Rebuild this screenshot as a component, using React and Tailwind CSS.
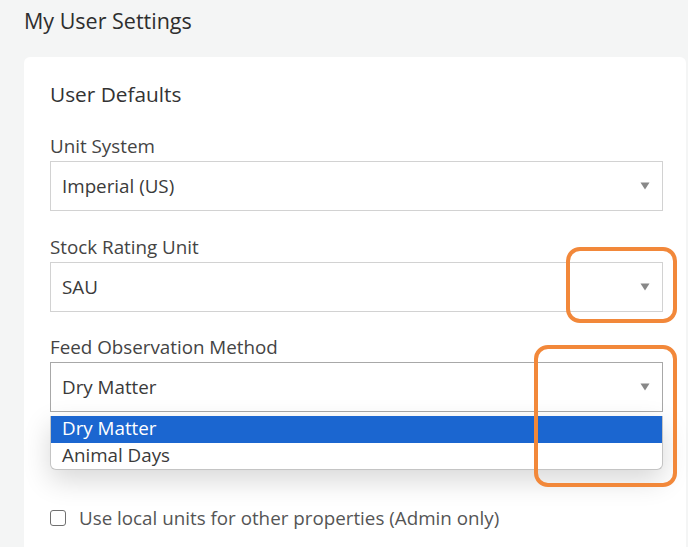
import React from "react";

function Arrow() {
  return (
    <svg width="10" height="8" viewBox="0 0 10 8" className="shrink-0">
      <path d="M0.5 0.5 H9.5 L5 7.5 Z" fill="#888888" />
    </svg>
  );
}

function Select({ value, focused }) {
  return (
    <div
      className={`mt-[3px] h-[50px] w-full flex items-center justify-between pl-[11px] pr-[12px] bg-white border ${
        focused ? "border-[#a8a8a8]" : "border-[#d2d2d2]"
      } text-[18.8px] text-[#3a3a3a]`}
    >
      <span>{value}</span>
      <Arrow />
    </div>
  );
}

function Label({ children, mt }) {
  return (
    <div className={`${mt} h-[24px] leading-[24px] text-[18.8px] text-[#444444]`}>{children}</div>
  );
}

export default function App() {
  return (
    <div
      className="relative w-[688px] h-[547px] overflow-hidden bg-[#f4f5f5]"
      style={{ fontFamily: "'Open Sans', Lato, sans-serif" }}
    >
      <div className="h-[57px] pl-[24px] pt-[7px] text-[21.5px] leading-[28px] text-[#2e2e2e]">
        My User Settings
      </div>
      <div className="ml-[24px] mr-[2px] h-[490px] bg-white rounded-t-[6px] pl-[26px] pr-[23px] pt-[23px]">
        <div className="h-[28px] leading-[28px] text-[20.8px] text-[#333333]">User Defaults</div>
        <Label mt="mt-[26px]">Unit System</Label>
        <Select value="Imperial (US)" />
        <Label mt="mt-[24px]">Stock Rating Unit</Label>
        <Select value="SAU" />
        <Label mt="mt-[23px]">Feed Observation Method</Label>
        <div className="relative">
          <Select value="Dry Matter" focused />
          <div className="absolute left-0 right-0 top-[54px] z-10 bg-white border border-[#c4c4c4] border-t-0 rounded-b-[6px] shadow-[0_10px_28px_rgba(0,0,0,0.16)] overflow-hidden text-[18.8px]">
            <div className="h-[27px] leading-[25px] pl-[11px] bg-[#1b66d0] text-white">Dry Matter</div>
            <div className="h-[26px] leading-[24px] pl-[11px] text-[#3a3a3a]">Animal Days</div>
          </div>
        </div>
        <div className="mt-[94px] flex items-center">
          <div className="w-[16px] h-[16px] rounded-[3px] border-[1.5px] border-[#707070] bg-white shrink-0" />
          <span className="ml-[13px] text-[18.8px] leading-[24px] text-[#555555]">
            Use local units for other properties (Admin only)
          </span>
        </div>
      </div>

      <div className="absolute left-[566px] top-[247px] w-[111px] h-[76px] border-[4px] border-[#f2883a] rounded-[14px] z-20" />
      <div className="absolute left-[534px] top-[345px] w-[143px] h-[142px] border-[4px] border-[#f2883a] rounded-[14px] z-20" />
    </div>
  );
}
